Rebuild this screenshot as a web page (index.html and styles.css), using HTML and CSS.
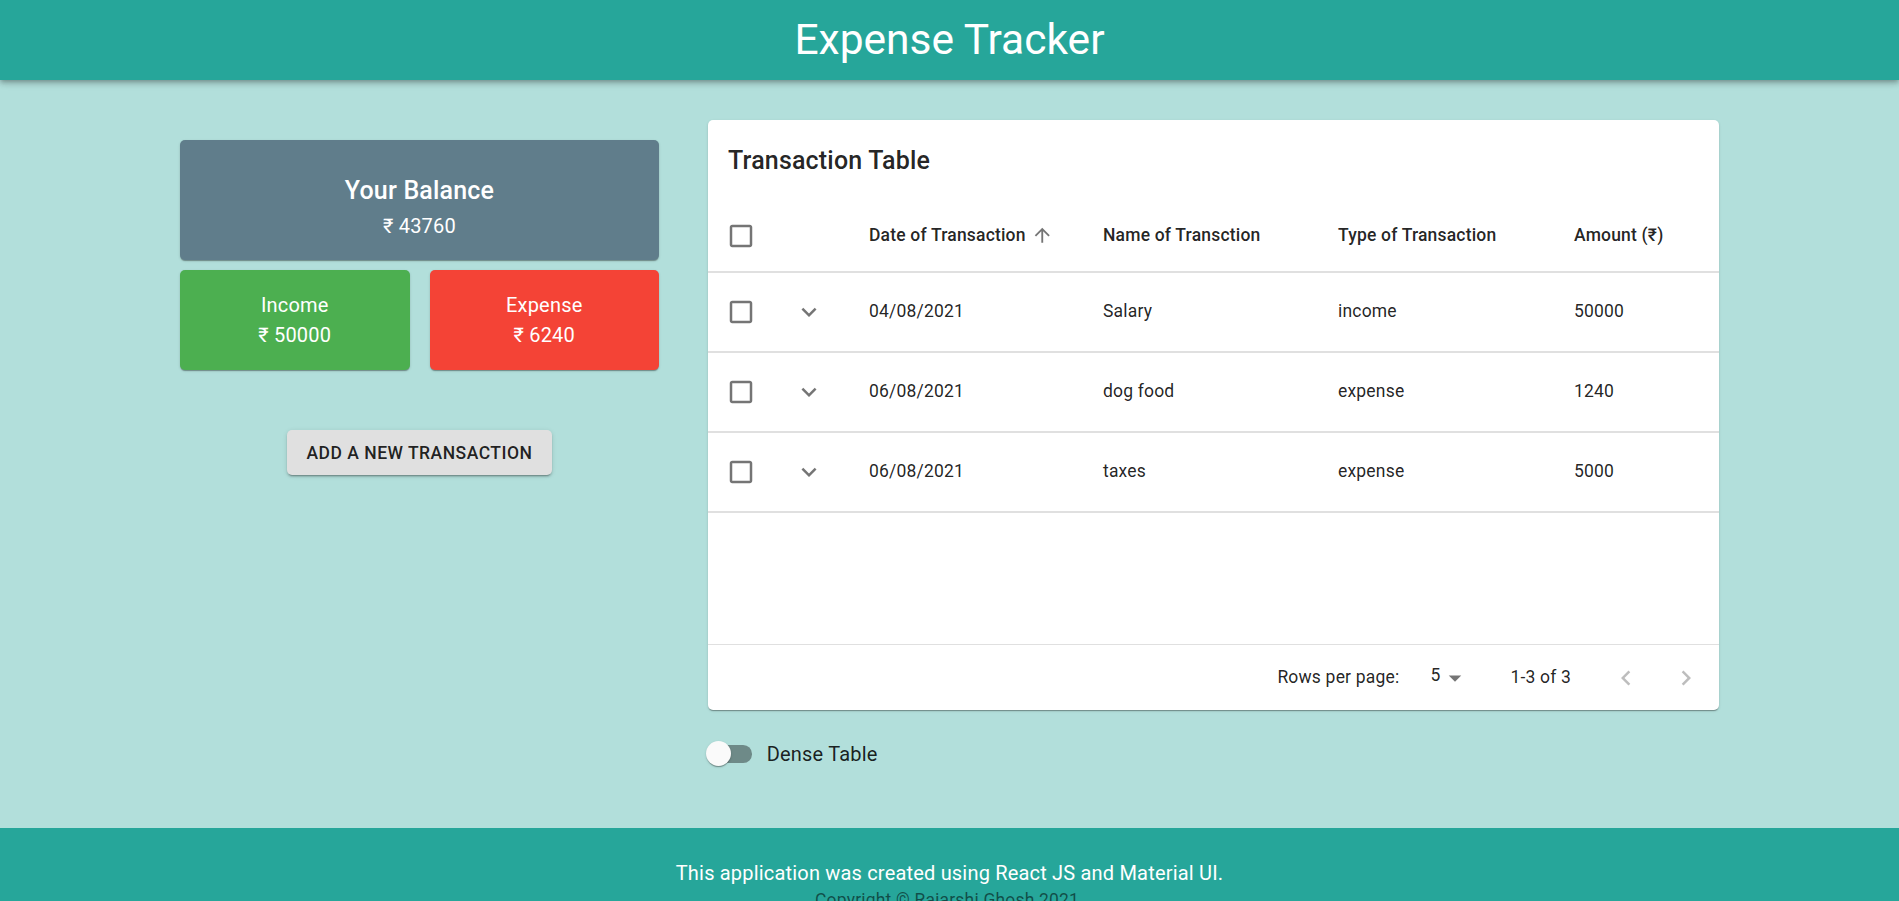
FILE: index.html
```html
<!DOCTYPE html>
<html lang="en">
<head>
<meta charset="utf-8">
<title>Expense Tracker</title>
<link rel="stylesheet" href="styles.css">
</head>
<body>
<header class="app-bar">
  <h1 class="app-title">Expense Tracker</h1>
</header>

<main class="main">
  <div class="layout">
    <section class="summary">
      <div class="card card-balance">
        <div class="card-title">Your Balance</div>
        <div class="card-amount">₹ 43760</div>
      </div>
      <div class="card-row">
        <div class="card card-small card-income">
          <div class="card-label">Income</div>
          <div class="card-amount">₹ 50000</div>
        </div>
        <div class="card card-small card-expense">
          <div class="card-label">Expense</div>
          <div class="card-amount">₹ 6240</div>
        </div>
      </div>
      <button class="btn-add" type="button">Add a new transaction</button>
    </section>

    <section class="table-section">
      <div class="paper">
        <div class="toolbar">
          <h2 class="table-title">Transaction Table</h2>
        </div>
        <div class="table" role="table">
          <div class="tr thead" role="row">
            <div class="td td-check"><svg class="ico-check" viewBox="0 0 24 24"><path d="M19 5v14H5V5h14m0-2H5c-1.1 0-2 .9-2 2v14c0 1.1.9 2 2 2h14c1.1 0 2-.9 2-2V5c0-1.1-.9-2-2-2z"/></svg></div>
            <div class="td td-expand"></div>
            <div class="td"><span class="sort-label">Date of Transaction<svg class="ico-sort" viewBox="0 0 24 24"><path d="M4 12l1.41 1.41L11 7.83V20h2V7.83l5.58 5.59L20 12l-8-8-8 8z"/></svg></span></div>
            <div class="td">Name of Transction</div>
            <div class="td">Type of Transaction</div>
            <div class="td">Amount (₹)</div>
          </div>

          <div class="tr" role="row">
            <div class="td td-check"><svg class="ico-check" viewBox="0 0 24 24"><path d="M19 5v14H5V5h14m0-2H5c-1.1 0-2 .9-2 2v14c0 1.1.9 2 2 2h14c1.1 0 2-.9 2-2V5c0-1.1-.9-2-2-2z"/></svg></div>
            <div class="td td-expand"><svg class="ico-expand" viewBox="0 0 24 24"><path d="M7.41 8.59L12 13.17l4.59-4.58L18 10l-6 6-6-6 1.41-1.41z"/></svg></div>
            <div class="td">04/08/2021</div>
            <div class="td">Salary</div>
            <div class="td">income</div>
            <div class="td">50000</div>
          </div>

          <div class="tr" role="row">
            <div class="td td-check"><svg class="ico-check" viewBox="0 0 24 24"><path d="M19 5v14H5V5h14m0-2H5c-1.1 0-2 .9-2 2v14c0 1.1.9 2 2 2h14c1.1 0 2-.9 2-2V5c0-1.1-.9-2-2-2z"/></svg></div>
            <div class="td td-expand"><svg class="ico-expand" viewBox="0 0 24 24"><path d="M7.41 8.59L12 13.17l4.59-4.58L18 10l-6 6-6-6 1.41-1.41z"/></svg></div>
            <div class="td">06/08/2021</div>
            <div class="td">dog food</div>
            <div class="td">expense</div>
            <div class="td">1240</div>
          </div>

          <div class="tr" role="row">
            <div class="td td-check"><svg class="ico-check" viewBox="0 0 24 24"><path d="M19 5v14H5V5h14m0-2H5c-1.1 0-2 .9-2 2v14c0 1.1.9 2 2 2h14c1.1 0 2-.9 2-2V5c0-1.1-.9-2-2-2z"/></svg></div>
            <div class="td td-expand"><svg class="ico-expand" viewBox="0 0 24 24"><path d="M7.41 8.59L12 13.17l4.59-4.58L18 10l-6 6-6-6 1.41-1.41z"/></svg></div>
            <div class="td">06/08/2021</div>
            <div class="td">taxes</div>
            <div class="td">expense</div>
            <div class="td">5000</div>
          </div>

          <div class="empty-row" role="row"></div>
        </div>

        <div class="pagination">
          <span class="rpp-label">Rows per page:</span>
          <span class="rpp-select"><span class="rpp-value">5</span><svg class="ico-drop" viewBox="0 0 24 24"><path d="M7 10l5 5 5-5z"/></svg></span>
          <span class="rpp-range">1-3 of 3</span>
          <span class="page-actions">
            <span class="page-btn"><svg class="ico-page" viewBox="0 0 24 24"><path d="M15.41 16.59L10.83 12l4.58-4.59L14 6l-6 6 6 6 1.41-1.41z"/></svg></span>
            <span class="page-btn"><svg class="ico-page" viewBox="0 0 24 24"><path d="M8.59 16.59L13.17 12 8.59 7.41 10 6l6 6-6 6-1.41-1.41z"/></svg></span>
          </span>
        </div>
      </div>

      <label class="dense-toggle">
        <span class="switch"><span class="switch-track"></span><span class="switch-thumb"></span></span>
        <span class="dense-label">Dense Table</span>
      </label>
    </section>
  </div>
</main>

<footer class="footer">
  <p class="footer-text">This application was created using React JS and Material UI.</p>
  <p class="copyright">Copyright © Rajarshi Ghosh 2021.</p>
</footer>
</body>
</html>
```

FILE: styles.css
```css
* { box-sizing: border-box; }

html { scrollbar-width: none; }
html::-webkit-scrollbar { display: none; }

body {
  margin: 0;
  background: #b2dfdb;
  font-family: Roboto, "Liberation Sans", Arial, sans-serif;
  color: rgba(0, 0, 0, 0.87);
}

/* Header */
.app-bar {
  position: relative;
  z-index: 1;
  height: 80px;
  background: #26a69a;
  display: flex;
  align-items: center;
  justify-content: center;
  box-shadow: 0px 2px 4px -1px rgba(0,0,0,0.2), 0px 4px 5px 0px rgba(0,0,0,0.14), 0px 1px 10px 0px rgba(0,0,0,0.12);
}

.app-title {
  margin: 0;
  font-size: 42.5px;
  font-weight: 400;
  line-height: 1.235;
  color: #fff;
}

/* Main layout */
.main {
  padding: 40px 0 46.5px;
}

.layout {
  width: 1539px;
  margin: 0 auto;
  display: flex;
  gap: 49px;
  align-items: flex-start;
}

.summary {
  width: 479px;
  padding-top: 20px;
  display: flex;
  flex-direction: column;
  align-items: center;
}

.card {
  border-radius: 5px;
  color: #fff;
  text-align: center;
  box-shadow: 0px 2px 1px -1px rgba(0,0,0,0.2), 0px 1px 1px 0px rgba(0,0,0,0.14), 0px 1px 3px 0px rgba(0,0,0,0.12);
}

.card-balance {
  width: 100%;
  height: 120px;
  padding-top: 31px;
  background: #607d8b;
}

.card-title {
  font-size: 25px;
  font-weight: 500;
  line-height: 40px;
  letter-spacing: 0.0075em;
}

.card-amount,
.card-label {
  font-size: 20px;
  line-height: 30px;
  letter-spacing: 0.00938em;
}

.card-row {
  width: 100%;
  display: flex;
  gap: 20px;
  margin-top: 10px;
}

.card-small {
  flex: 1;
  height: 100px;
  padding-top: 20px;
}

.card-income { background: #4caf50; }
.card-expense { background: #f44336; }

.btn-add {
  margin-top: 60px;
  height: 45px;
  padding: 0 20px;
  border: 0;
  border-radius: 5px;
  background: #e0e0e0;
  color: rgba(0, 0, 0, 0.87);
  font-family: inherit;
  font-size: 17.5px;
  font-weight: 500;
  letter-spacing: 0.02857em;
  text-transform: uppercase;
  box-shadow: 0px 3px 1px -2px rgba(0,0,0,0.2), 0px 2px 2px 0px rgba(0,0,0,0.14), 0px 1px 5px 0px rgba(0,0,0,0.12);
}

/* Table */
.table-section {
  width: 1011px;
}

.paper {
  background: #fff;
  border-radius: 5px;
  overflow: hidden;
  box-shadow: 0px 2px 1px -1px rgba(0,0,0,0.2), 0px 1px 1px 0px rgba(0,0,0,0.14), 0px 1px 3px 0px rgba(0,0,0,0.12);
}

.toolbar {
  height: 81px;
  padding-left: 20px;
  display: flex;
  align-items: center;
}

.table-title {
  margin: 0;
  font-size: 25px;
  font-weight: 500;
  line-height: 1.6;
  letter-spacing: 0.0075em;
  color: rgba(0, 0, 0, 0.87);
}

.tr {
  display: grid;
  grid-template-columns: 60px 81px 234px 235px 236px 1fr;
  align-items: center;
  height: 80px;
  border-bottom: 2px solid #e0e0e0;
}

.thead {
  height: 71.5px;
  font-weight: 500;
}

.td {
  padding-left: 20px;
  font-size: 17.5px;
  line-height: 1.43;
  letter-spacing: 0.01071em;
  white-space: nowrap;
}

.td-check {
  padding-left: 18px;
  display: flex;
  align-items: center;
}

.td-expand {
  padding-left: 0;
  display: flex;
  justify-content: center;
  align-items: center;
}

.ico-check {
  width: 30px;
  height: 30px;
  fill: rgba(0, 0, 0, 0.54);
  display: block;
}

.ico-expand {
  width: 30px;
  height: 30px;
  fill: rgba(0, 0, 0, 0.54);
  display: block;
}

.sort-label {
  display: inline-flex;
  align-items: center;
}

.ico-sort {
  width: 22.5px;
  height: 22.5px;
  margin: 0 5px;
  fill: rgba(0, 0, 0, 0.54);
}

.empty-row {
  height: 132.5px;
  border-bottom: 1px solid #e0e0e0;
}

/* Pagination */
.pagination {
  height: 65px;
  padding-right: 3px;
  display: flex;
  justify-content: flex-end;
  align-items: center;
  font-size: 17.5px;
  line-height: 1.43;
  letter-spacing: 0.01071em;
}

.rpp-select {
  display: inline-flex;
  align-items: center;
  margin: 0 40px 0 21px;
  padding-left: 10px;
}

.rpp-value {
  font-size: 17.5px;
  margin-top: -3px;
}

.ico-drop {
  width: 30px;
  height: 30px;
  fill: rgba(0, 0, 0, 0.54);
  display: block;
}

.page-actions {
  display: inline-flex;
  margin-left: 25px;
}

.page-btn {
  width: 60px;
  height: 60px;
  display: inline-flex;
  align-items: center;
  justify-content: center;
}

.ico-page {
  width: 30px;
  height: 30px;
  fill: rgba(0, 0, 0, 0.26);
}

/* Dense toggle */
.dense-toggle {
  display: inline-flex;
  align-items: center;
  margin: 20px 0 0 -13.75px;
}

.switch {
  position: relative;
  width: 72.5px;
  height: 47.5px;
}

.switch-track {
  position: absolute;
  left: 15px;
  top: 15px;
  width: 42.5px;
  height: 17.5px;
  border-radius: 8.75px;
  background: #000;
  opacity: 0.38;
}

.switch-thumb {
  position: absolute;
  left: 11.25px;
  top: 11.25px;
  width: 25px;
  height: 25px;
  border-radius: 50%;
  background: #fafafa;
  box-shadow: 0px 2px 1px -1px rgba(0,0,0,0.2), 0px 1px 1px 0px rgba(0,0,0,0.14), 0px 1px 3px 0px rgba(0,0,0,0.12);
}

.dense-label {
  font-size: 20px;
  line-height: 1.5;
  letter-spacing: 0.00938em;
}

/* Footer */
.footer {
  background: #26a69a;
  text-align: center;
  padding: 30px 0 20px;
}

.footer-text {
  margin: 0;
  font-size: 20px;
  line-height: 30px;
  letter-spacing: 0.00938em;
  color: #fff;
}

.copyright {
  margin: 0;
  font-size: 17.5px;
  line-height: 1.43;
  letter-spacing: 0.01071em;
  color: rgba(0, 0, 0, 0.54);
}
```
